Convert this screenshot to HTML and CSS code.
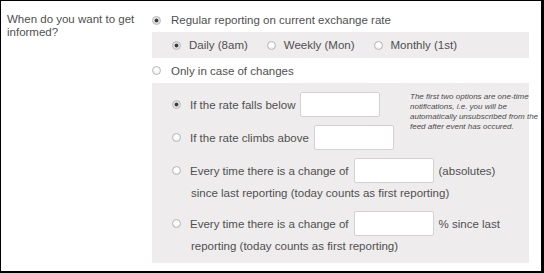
FILE: index.html
```html
<!DOCTYPE html>
<html lang="en">

<head>
   <meta charset="UTF-8">
   <title>Notifications</title>
   <link rel="stylesheet" href="styles.css">
</head>

<body>
   <div class="frame">
      <div class="question">When do you want to get informed?</div>

      <div class="answers">
         <div class="choice"><span class="radio checked"></span>Regular reporting on current exchange rate</div>

         <div class="panel panel-freq">
            <span class="sub"><span class="radio checked"></span>Daily (8am)</span>
            <span class="sub"><span class="radio"></span>Weekly (Mon)</span>
            <span class="sub"><span class="radio"></span>Monthly (1st)</span>
         </div>

         <div class="choice"><span class="radio"></span>Only in case of changes</div>

         <div class="panel panel-change">
            <div class="opt">
               <div class="opt-line"><span class="radio checked"></span>If the rate falls below<input class="field"></div>
            </div>
            <p class="note">The first two options are one-time notifications, i.e. you will be automatically unsubscribed from the feed after event has occured.</p>
            <div class="opt">
               <div class="opt-line"><span class="radio"></span>If the rate climbs above<input class="field"></div>
            </div>
            <div class="opt opt-wide">
               <div class="opt-line"><span class="radio"></span>Every time there is a change of<input class="field"><span class="after">(absolutes)</span></div>
               <div class="opt-cont">since last reporting (today counts as first reporting)</div>
            </div>
            <div class="opt opt-wide">
               <div class="opt-line"><span class="radio"></span>Every time there is a change of<input class="field"><span class="after">% since last</span></div>
               <div class="opt-cont">reporting (today counts as first reporting)</div>
            </div>
         </div>
      </div>
   </div>
</body>

</html>
```

FILE: styles.css
```css
html,
body {
   margin: 0;
   padding: 0;
   background: white;
   font-family: 'Liberation Sans', Arial, sans-serif;
   font-size: 11.5px;
   color: #505050;
}

.frame {
   width: 544px;
   height: 273px;
   box-sizing: border-box;
   border-style: solid;
   border-color: black;
   border-width: 1px 3px 2px 1px;
   padding: 7px 0 0 6px;
   display: flex;
}

.question {
   width: 145px;
   padding-top: 5px;
   line-height: 13px;
}

.answers {
   width: 377px;
}

.choice {
   display: flex;
   align-items: center;
   height: 24px;
}

.choice + .panel + .choice {
   height: 25px;
}

.choice .radio {
   margin-right: 10px;
}

.panel {
   background: #eeecec;
}

.panel-freq {
   height: 26px;
   padding-left: 20px;
   display: flex;
   align-items: center;
   gap: 19px;
}

.sub {
   display: flex;
   align-items: center;
}

.sub .radio {
   margin-right: 8px;
}

.panel-change {
   padding: 9px 0 7px 20px;
   display: grid;
   grid-template-columns: 1fr 119px;
   row-gap: 8px;
   align-items: start;
}

.opt-wide {
   grid-column: 1 / -1;
}

.opt-line {
   display: flex;
   align-items: center;
   height: 25px;
}

.opt-line .radio {
   margin-right: 9px;
}

.opt-cont {
   padding-left: 19px;
   line-height: 20px;
}

.field {
   width: 80px;
   height: 25px;
   box-sizing: border-box;
   margin: 0 0 0 5px;
   border: 1px solid #d2d2d2;
   border-radius: 2px;
   background: white;
}

.after {
   margin-left: 5px;
}

.note {
   grid-column: 2;
   grid-row: 1 / span 2;
   width: 132px;
   margin: 0;
   font-size: 8px;
   line-height: 10px;
   font-style: italic;
   color: #4a4a4a;
}

.radio {
   flex: none;
   width: 9px;
   height: 9px;
   box-sizing: border-box;
   border: 1px solid #b8b8b8;
   border-radius: 50%;
   background: radial-gradient(circle at 50% 40%, #ffffff 30%, #e2e2e2 100%);
}

.radio.checked {
   background: radial-gradient(circle, #3c3c3c 0, #3c3c3c 1.6px, #d8d8d8 2.2px, #f4f4f4 100%);
}
```
